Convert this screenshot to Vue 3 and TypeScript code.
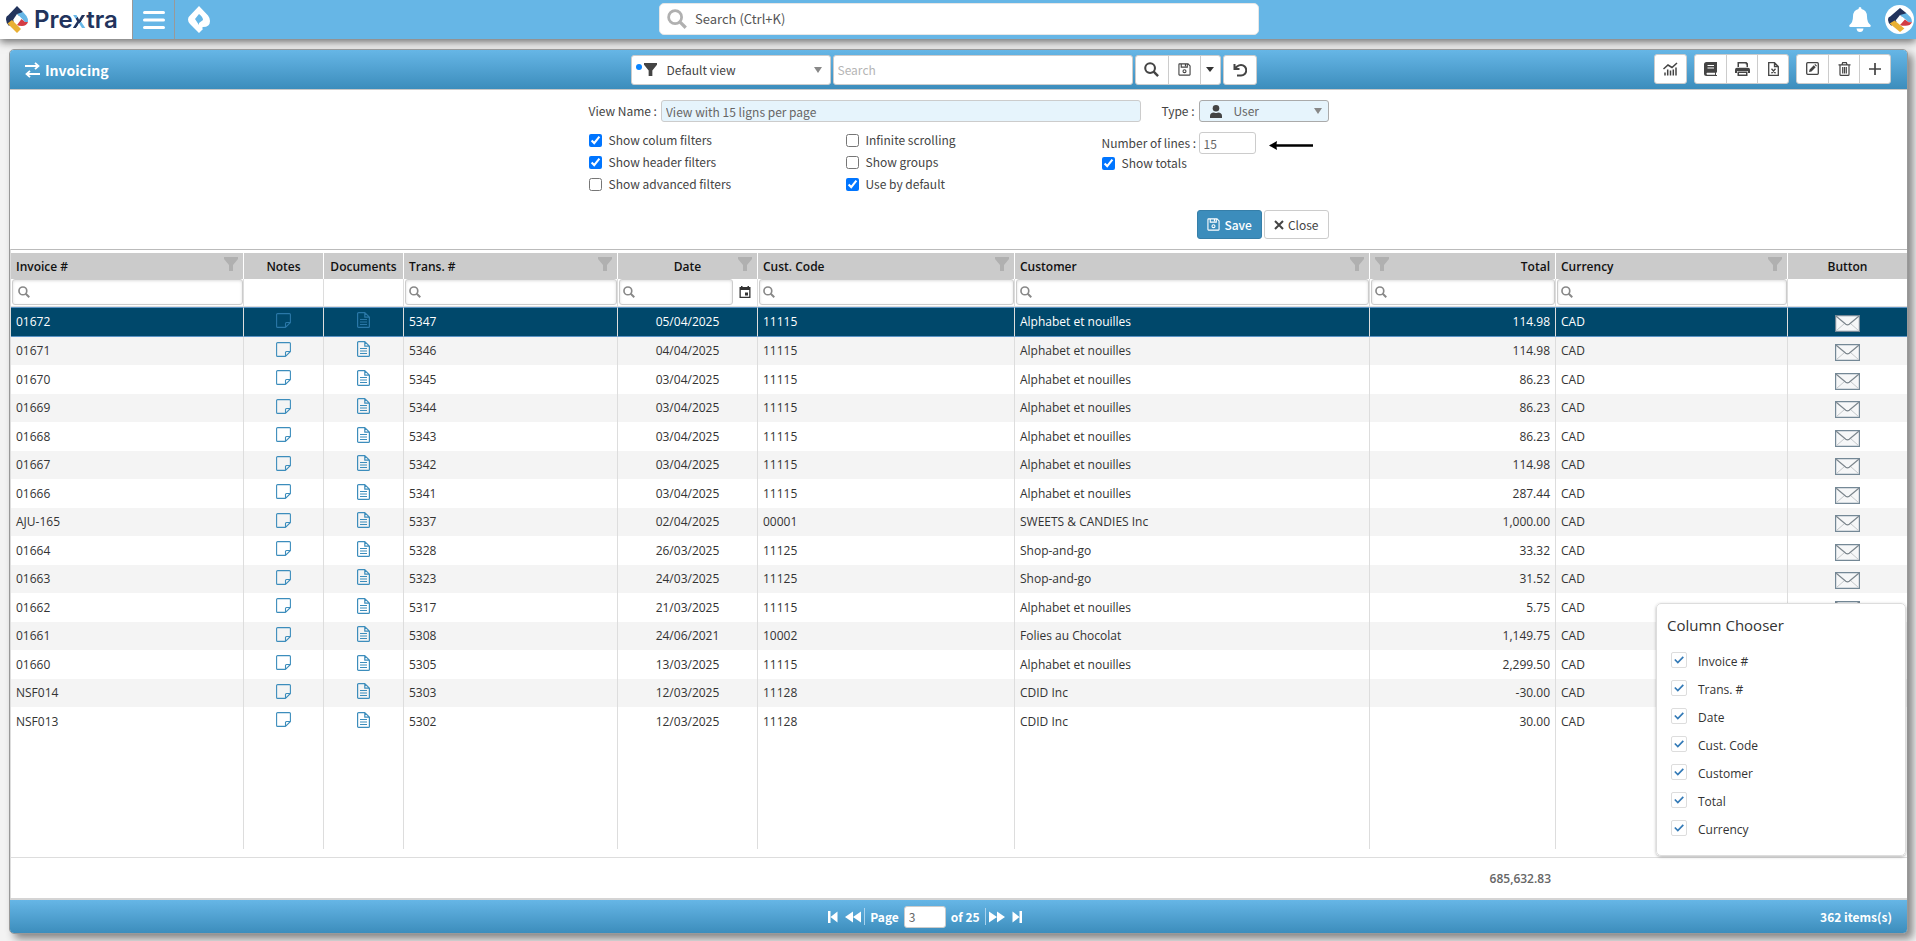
<script setup lang="ts">
import { ref } from 'vue'

interface Invoice {
  id: string
  trans: string
  date: string
  code: string
  customer: string
  total: string
}

interface Column {
  key: string
  label: string
  align: 'left' | 'center' | 'right'
  filter: boolean
}

const columns: Column[] = [
  { key: 'invoice', label: 'Invoice #', align: 'left', filter: true },
  { key: 'notes', label: 'Notes', align: 'center', filter: false },
  { key: 'documents', label: 'Documents', align: 'center', filter: false },
  { key: 'trans', label: 'Trans. #', align: 'left', filter: true },
  { key: 'date', label: 'Date', align: 'center', filter: true },
  { key: 'code', label: 'Cust. Code', align: 'left', filter: true },
  { key: 'customer', label: 'Customer', align: 'left', filter: true },
  { key: 'total', label: 'Total', align: 'right', filter: true },
  { key: 'currency', label: 'Currency', align: 'left', filter: true },
  { key: 'button', label: 'Button', align: 'center', filter: false },
]

const source: [string, string, string, string, string, string][] = [
  ['01672', '5347', '05/04/2025', '11115', 'Alphabet et nouilles', '114.98'],
  ['01671', '5346', '04/04/2025', '11115', 'Alphabet et nouilles', '114.98'],
  ['01670', '5345', '03/04/2025', '11115', 'Alphabet et nouilles', '86.23'],
  ['01669', '5344', '03/04/2025', '11115', 'Alphabet et nouilles', '86.23'],
  ['01668', '5343', '03/04/2025', '11115', 'Alphabet et nouilles', '86.23'],
  ['01667', '5342', '03/04/2025', '11115', 'Alphabet et nouilles', '114.98'],
  ['01666', '5341', '03/04/2025', '11115', 'Alphabet et nouilles', '287.44'],
  ['AJU-165', '5337', '02/04/2025', '00001', 'SWEETS & CANDIES Inc', '1,000.00'],
  ['01664', '5328', '26/03/2025', '11125', 'Shop-and-go', '33.32'],
  ['01663', '5323', '24/03/2025', '11125', 'Shop-and-go', '31.52'],
  ['01662', '5317', '21/03/2025', '11115', 'Alphabet et nouilles', '5.75'],
  ['01661', '5308', '24/06/2021', '10002', 'Folies au Chocolat', '1,149.75'],
  ['01660', '5305', '13/03/2025', '11115', 'Alphabet et nouilles', '2,299.50'],
  ['NSF014', '5303', '12/03/2025', '11128', 'CDID Inc', '-30.00'],
  ['NSF013', '5302', '12/03/2025', '11128', 'CDID Inc', '30.00'],
]

const invoices: Invoice[] = source.map(([id, trans, date, code, customer, total]) => ({
  id, trans, date, code, customer, total,
}))

const selected = ref('01672')
const viewName = ref('View with 15 ligns per page')
const lines = ref('15')
const page = ref('3')

const optionColumns = ref([
  [
    { label: 'Show colum filters', on: true },
    { label: 'Show header filters', on: true },
    { label: 'Show advanced filters', on: false },
  ],
  [
    { label: 'Infinite scrolling', on: false },
    { label: 'Show groups', on: false },
    { label: 'Use by default', on: true },
  ],
])
const showTotals = ref(true)

const chooser = ref(
  ['Invoice #', 'Trans. #', 'Date', 'Cust. Code', 'Customer', 'Total', 'Currency'].map((label) => ({
    label,
    on: true,
  })),
)
</script>

<template>
  <div class="page">
    <svg class="defs" aria-hidden="true">
      <symbol id="i-funnel" viewBox="0 0 14 14"><path fill="currentColor" d="M0 0h14v2L9 8v6H5V8L0 2z" /></symbol>
      <symbol id="i-search" viewBox="0 0 16 16">
        <circle cx="6.5" cy="6.5" r="5.2" fill="none" stroke="currentColor" stroke-width="2.2" />
        <path d="M10.3 10.3 15 15" stroke="currentColor" stroke-width="2.6" />
      </symbol>
      <symbol id="i-save" viewBox="0 0 14 14">
        <path fill="none" stroke="currentColor" stroke-width="1.2" d="M1.6 1h9.2L13 3.2v9.2a.6.6 0 0 1-.6.6H1.6a.6.6 0 0 1-.6-.6V1.6A.6.6 0 0 1 1.6 1zM3.5 1v3.500h6.500V1M8 1.500v2" />
        <circle cx="7" cy="8.800" r="1.600" fill="none" stroke="currentColor" stroke-width="1.200" />
      </symbol>
      <symbol id="i-note" viewBox="0 0 15 15">
        <path fill="none" stroke="currentColor" stroke-width="1.100" stroke-linejoin="round" d="M1.600.6h11.800a1 1 0 0 1 1 1V9.500L9.500 14.400H1.600a1 1 0 0 1-1-1V1.600a1 1 0 0 1 1-1zM14.400 9.500h-3.900a1 1 0 0 0-1 1v3.900" />
      </symbol>
      <symbol id="i-doc" viewBox="0 0 13 16">
        <path fill="none" stroke="currentColor" stroke-width="1.200" stroke-linejoin="round" d="M1.600.6h6.200l4.600 4.600v9.200a1 1 0 0 1-1 1H1.600a1 1 0 0 1-1-1V1.600a1 1 0 0 1 1-1zM7.800.6v4.600h4.600M3 7.500h7M3 10h7M3 12.500h7" />
      </symbol>
      <symbol id="i-mail" viewBox="0 0 25 17">
        <path fill="#f6f7f8" stroke="#748896" stroke-width="1.200" d="M.6.6h23.800v15.800H.6z" />
        <path fill="none" stroke="#c4c8cb" d="m1.500 15.500 8-7M23.500 15.500l-8-7" />
        <path fill="none" stroke="#7c868d" stroke-width="1.200" d="m1.200 1.200 9.600 8q1.700 1.200 3.400 0l9.600-8" />
      </symbol>
      <symbol id="i-drop" viewBox="0 0 22 27">
        <path fill="#fff" fill-rule="evenodd" d="M11 0 20 9.500Q22 12 22 15q0 6-7 6l-1 1 1 1-4 4L2 18Q0 16 0 13.500T2 9.500zM11 8 7 13l4 6v-2l4-3q0-3-4-6z" />
      </symbol>
      <symbol id="i-brand" viewBox="0 0 22 27">
        <path fill="#22335c" d="M11 0 17 6 3 20Q0 17 0 13.500T2 9.500z" />
        <path fill="#66b6e6" d="m17 6 3.500 4Q22 12 22 16h-3L11 8z" />
        <path fill="#fff" d="m11 8 6 6-6 5-4-5z" />
        <path fill="#d23c44" d="M15.500 13 19 16h3q-1.500 4-6 4-3.500 0-5-1z" />
        <path fill="#e9b034" d="m6 14 9 9-4 4L1.500 17.500z" />
      </symbol>
      <symbol id="i-first" viewBox="0 0 10 12"><path fill="currentColor" d="M0 0h2.500v12H0zM9.500.5v11L2.500 6z" /></symbol>
      <symbol id="i-rewind" viewBox="0 0 16 12"><path fill="currentColor" d="M8 .5v11L0 6zM16 .5v11L8 6z" /></symbol>
    </svg>

    <header class="topbar">
      <a class="logo" href="#" aria-label="Prextra">
        <svg class="mark"><use href="#i-brand" /></svg>
        <span>Pre<span class="ex">x</span>tra</span>
      </a>
      <button class="top-btn menu" type="button" aria-label="Menu">
        <svg width="22" height="18" viewBox="0 0 22 18"><path d="M1.500 1.500h19M1.500 9h19M1.500 16.500h19" stroke="#fff" stroke-width="3" stroke-linecap="round" /></svg>
      </button>
      <button class="top-btn" type="button" aria-label="Home">
        <svg class="mark"><use href="#i-drop" /></svg>
      </button>
      <label class="global-search">
        <svg width="20" height="20"><use href="#i-search" /></svg>
        <input type="text" aria-label="Search everywhere" placeholder="Search (Ctrl+K)" />
      </label>
      <div class="top-right">
        <button class="top-icon" type="button" aria-label="Notifications">
          <svg width="22" height="25" viewBox="0 0 22 25"><path fill="#fff" d="M11 0q1.500 0 1.500 2 5.500 1.300 5.500 7.500 0 6 3.500 8.500.8 2-1 2h-19q-1.800 0-1-2Q4 15.500 4 9.500 4 3.300 9.500 2q0-2 1.500-2zM7.500 21.500h7Q14 25 11 25t-3.500-3.500z" /></svg>
        </button>
        <button class="avatar" type="button" aria-label="Account">
          <svg width="24" height="24" viewBox="0 0 22 27" preserveAspectRatio="none"><use href="#i-brand" width="22" height="27" /></svg>
        </button>
      </div>
    </header>

    <main class="panel">
      <div class="panel-head">
        <h1>
          <svg width="15" height="16" viewBox="0 0 15 16"><path fill="none" stroke="#fff" stroke-width="1.800" d="M0 4h13M10 .8 13.500 4 10 7.200M15 12H2M5 8.800 1.500 12 5 15.200" /></svg>
          Invoicing
        </h1>
        <div class="view-tools">
          <div class="view-select">
            <i class="dot"></i>
            <svg class="funnel" width="13" height="13"><use href="#i-funnel" /></svg>
            <select aria-label="View"><option>Default view</option></select>
            <i class="caret"></i>
          </div>
          <input class="grid-search" type="text" aria-label="Search invoices" placeholder="Search" />
          <div class="group">
            <button type="button" aria-label="Search"><svg width="15" height="15"><use href="#i-search" /></svg></button>
            <button type="button" aria-label="Save view"><svg width="13" height="13"><use href="#i-save" /></svg></button>
            <button class="slim" type="button" aria-label="More"><i class="caret dark"></i></button>
          </div>
          <div class="group undo">
            <button type="button" aria-label="Reset">
              <svg width="14" height="14" viewBox="0 0 14 14"><path fill="none" stroke="currentColor" stroke-width="2" d="M1.500 1v5h5M2 5.500 4 3.500Q6 2 8 2a5 5 0 0 1 0 10.500H4" /></svg>
            </button>
          </div>
        </div>
        <div class="actions">
          <div class="group">
            <button type="button" aria-label="Chart">
              <svg width="15" height="14" viewBox="0 0 15 14"><path fill="none" stroke="currentColor" stroke-width="1.500" d="M.5 7 5 3l4 2.500L14 1M2 13.500v-3M4.700 13.500v-6M7.500 13.500v-5M10.300 13.500v-6M13 13.500v-8" /></svg>
            </button>
          </div>
          <div class="group">
            <button type="button" aria-label="Journal">
              <svg width="13" height="14" viewBox="0 0 13 14"><path fill="currentColor" fill-rule="evenodd" d="M2.500 0H13v10.500h-1V13h1v1H2.500Q0 14 0 11.500v-9Q0 0 2.500 0zM3.500 3v1H10V3zM3.500 5.500v1H10v-1zM3 10.800q-1.200 1 0 2h8v-2z" /></svg>
            </button>
            <button type="button" aria-label="Print">
              <svg width="15" height="14" viewBox="0 0 15 14"><path fill="currentColor" fill-rule="evenodd" d="M2.500 0h9L13 1.500V5h-1.500V2.500h-.8V1.500H4V5H2.500zM2 5.800h11q2 0 2 2V11h-2V9H2v2H0V7.800q0-2 2-2zM2.500 9.500h10V14h-10zM4 11v1.500h7V11z" /></svg>
            </button>
            <button type="button" aria-label="Export to Excel">
              <svg width="11" height="14" viewBox="0 0 11 14"><path fill="none" stroke="currentColor" stroke-width="1.300" d="M1.500.7h5l3.800 3.800v8.800H.7V.7zM6.500.7v3.800h3.800M3.500 6.800l4 4.500M7.500 6.800l-4 4.500" /></svg>
            </button>
          </div>
          <div class="group">
            <button type="button" aria-label="Edit">
              <svg width="13" height="13" viewBox="0 0 13 13"><rect x=".7" y=".7" width="11.600" height="11.600" rx="1" fill="none" stroke="currentColor" stroke-width="1.300" /><path fill="currentColor" d="m3 10 .6-2.500L7.800 3.300 9.700 5.200 5.500 9.400zM8.400 2.800l.8-.8L11 3.800l-.8.8z" /></svg>
            </button>
            <button type="button" aria-label="Delete">
              <svg width="13" height="14" viewBox="0 0 13 14"><path fill="none" stroke="currentColor" stroke-width="1.200" d="M.5 2.800h12M4 2.500 4.700.6h3.600L9 2.500M2 3v9.400q0 1 1 1h7q1 0 1-1V3M4.700 5v6.500M6.500 5v6.500M8.300 5v6.500" /></svg>
            </button>
            <button type="button" aria-label="Add">
              <svg width="12" height="12" viewBox="0 0 12 12"><path fill="none" stroke="currentColor" stroke-width="1.700" d="M6 0v12M0 6h12" /></svg>
            </button>
          </div>
        </div>
      </div>

      <form class="view-form" @submit.prevent>
        <div class="name-row">
          <label for="view-name">View Name :</label>
          <input id="view-name" v-model="viewName" class="field blue" type="text" />
          <label class="type-label" for="view-type">Type :</label>
          <div class="type-select">
            <svg width="12" height="13" viewBox="0 0 12 13"><circle cx="6" cy="3.300" r="3.300" fill="currentColor" /><path fill="currentColor" d="M0 13v-2q0-3.500 4-3.500 2 1 4 0 4 0 4 3.500v2z" /></svg>
            <select id="view-type"><option>User</option></select>
            <i class="caret"></i>
          </div>
        </div>
        <div class="options">
          <div v-for="(list, i) in optionColumns" :key="i" class="option-list">
            <label v-for="o in list" :key="o.label"><input v-model="o.on" type="checkbox" />{{ o.label }}</label>
          </div>
          <div class="lines-list">
            <div class="lines-row">
              <label for="lines">Number of lines :</label>
              <input id="lines" v-model="lines" class="field" type="text" />
              <svg width="44" height="9" viewBox="0 0 44 9"><path d="M0 4.500 8 0 7.500 3.200H44v2.600H7.500L8 9z" /></svg>
            </div>
            <label><input v-model="showTotals" type="checkbox" />Show totals</label>
          </div>
        </div>
        <div class="form-actions">
          <button class="save" type="submit"><svg width="13" height="13"><use href="#i-save" /></svg>Save</button>
          <button class="close" type="button">
            <svg width="10" height="10" viewBox="0 0 10 10"><path d="m1 1 8 8M9 1 1 9" stroke="currentColor" stroke-width="2" /></svg>Close
          </button>
        </div>
      </form>

      <div class="grid-wrap">
        <table>
          <colgroup>
            <col v-for="c in columns" :key="c.key" :class="'c-' + c.key" />
          </colgroup>
          <thead>
            <tr class="head">
              <th v-for="c in columns" :key="c.key" :class="c.align" scope="col">
                <div class="th">
                  <span>{{ c.label }}</span>
                  <svg v-if="c.filter" width="14" height="14"><use href="#i-funnel" /></svg>
                </div>
              </th>
            </tr>
            <tr class="filters">
              <td v-for="c in columns" :key="c.key">
                <div v-if="c.filter" class="filter-cell">
                  <div class="filter-box">
                    <svg width="12" height="12"><use href="#i-search" /></svg>
                    <input type="text" :aria-label="'Filter ' + c.label" />
                  </div>
                  <button v-if="c.key === 'date'" type="button" aria-label="Pick a date">
                    <svg width="12" height="12" viewBox="0 0 12 12"><path fill="currentColor" fill-rule="evenodd" d="M2 0h1.500v1h5V0H10v1h1.500v11H.5V1H2zM1.800 4v6.700h8.400V4zM6 6.500h3v3H6z" /></svg>
                  </button>
                </div>
              </td>
            </tr>
          </thead>
          <tbody>
            <tr v-for="r in invoices" :key="r.id" class="row" :class="{ selected: r.id === selected }" @click="selected = r.id">
              <td>{{ r.id }}</td>
              <td class="center icon"><svg width="15" height="15"><use href="#i-note" /></svg></td>
              <td class="center icon"><svg width="13" height="16"><use href="#i-doc" /></svg></td>
              <td>{{ r.trans }}</td>
              <td class="center">{{ r.date }}</td>
              <td>{{ r.code }}</td>
              <td>{{ r.customer }}</td>
              <td class="right">{{ r.total }}</td>
              <td>CAD</td>
              <td class="center mail"><svg width="25" height="17"><use href="#i-mail" /></svg></td>
            </tr>
            <tr class="filler"><td v-for="c in columns" :key="c.key"></td></tr>
            <tr class="gap"><td colspan="10"></td></tr>
          </tbody>
          <tfoot>
            <tr>
              <td colspan="7"></td>
              <td class="right">685,632.83</td>
              <td colspan="2"></td>
            </tr>
          </tfoot>
        </table>

        <fieldset class="chooser">
          <legend>Column Chooser</legend>
          <label v-for="c in chooser" :key="c.label">
            <span class="box">
              <input v-model="c.on" type="checkbox" />
              <svg v-if="c.on" width="10" height="8" viewBox="0 0 10 8"><path fill="none" stroke="#337ab7" stroke-width="1.700" d="m.8 3.500 3 3L9.300.8" /></svg>
            </span>
            {{ c.label }}
          </label>
        </fieldset>
      </div>

      <footer class="pager">
        <nav aria-label="Pages">
          <button type="button" aria-label="First page"><svg width="10" height="12"><use href="#i-first" /></svg></button>
          <button type="button" aria-label="Previous page"><svg width="16" height="12"><use href="#i-rewind" /></svg></button>
          <span class="current">
            <label for="page">Page</label>
            <input id="page" v-model="page" class="field" type="text" />
            of 25
          </span>
          <button class="flip" type="button" aria-label="Next page"><svg width="16" height="12"><use href="#i-rewind" /></svg></button>
          <button class="flip" type="button" aria-label="Last page"><svg width="10" height="12"><use href="#i-first" /></svg></button>
        </nav>
        <span class="count">362 items(s)</span>
      </footer>
    </main>
  </div>
</template>

<style>
body {
  background: #f3f3f3;
}
</style>

<style scoped>
.page,
.page * {
  box-sizing: border-box;
}
.page {
  min-height: 100vh;
  display: flex;
  flex-direction: column;
  background: #f3f3f3;
  color: #444;
  font: 12px/18px "Noto Sans CJK SC", "Open Sans", sans-serif;
}
.defs {
  position: absolute;
  width: 0;
  height: 0;
}
svg {
  display: block;
  flex: none;
}
button,
input,
select {
  font: inherit;
  color: inherit;
  margin: 0;
}
button {
  border: 0;
  background: none;
  padding: 0;
  display: flex;
  align-items: center;
  justify-content: center;
  cursor: pointer;
}
select {
  appearance: none;
  border: 0;
  background: none;
  padding: 0;
  flex: 1;
  min-width: 0;
  outline: 0;
}
.mark {
  width: 22px;
  height: 27px;
}

.topbar {
  height: 39px;
  flex: none;
  display: grid;
  grid-template-columns: auto auto auto minmax(0, 1fr) auto;
  background: #66b6e6;
  box-shadow: 0 3px 8px rgba(0, 0, 0, 0.55);
}
.logo {
  width: 133px;
  background: #fff;
  border-right: 1px solid #999;
  display: flex;
  align-items: center;
  gap: 6px;
  padding-left: 6px;
  color: #22335c;
  text-decoration: none;
  font: 600 24px/36px Inter, Lato, sans-serif;
}
.ex {
  color: transparent;
  background: linear-gradient(128deg, #66b6e6 41%, #22335c 41%, #22335c 59%, #66b6e6 59%);
  background-clip: text;
}
.top-btn {
  width: 48px;
}
.menu {
  width: 42px;
  border-right: 1px solid #999;
}
.global-search {
  justify-self: center;
  width: 600px;
  margin: 3px 0 4px;
  background: #fff;
  border: 1px solid #e6e6e6;
  border-radius: 5px;
  display: flex;
  align-items: center;
  gap: 8px;
  padding: 0 7px;
  color: #b0b0b0;
}
.global-search input {
  flex: 1;
  border: 0;
  outline: 0;
  padding: 0;
  background: none;
  font-size: 13px;
}
.global-search input::placeholder {
  color: #555;
}
.top-right {
  display: flex;
  align-items: center;
  justify-content: flex-end;
  gap: 14px;
  width: 221px;
  padding-right: 2px;
}
.avatar {
  width: 29px;
  height: 29px;
  border-radius: 50%;
  background: #fff;
}

.panel {
  flex: 1;
  margin: 10px 8px 7px 9px;
  display: flex;
  flex-direction: column;
  border: 1px solid #999;
  border-radius: 5px;
  background: #fff;
  box-shadow: 5px 5px 8px rgba(0, 0, 0, 0.45);
}
.panel-head {
  display: flex;
  align-items: center;
  height: 40px;
  flex: none;
  padding: 0 16px 0 15px;
  border-bottom: 1px solid #c8c8c8;
  border-radius: 4px 4px 0 0;
  background: linear-gradient(#66b6e6, #3c8dbc);
}
h1 {
  flex: 1 1 0;
  display: flex;
  align-items: center;
  gap: 5px;
  margin: 0;
  color: #fff;
  font-size: 14px;
  line-height: 20px;
  font-weight: 700;
}
.view-tools {
  display: flex;
  gap: 2px;
  height: 30px;
  margin-right: 29px;
}
.view-select {
  width: 200px;
  display: flex;
  align-items: center;
  background: #fff;
  border: 1px solid #ccc;
  border-radius: 3px;
  padding: 0 8px 0 4px;
}
.dot {
  width: 6px;
  height: 6px;
  border-radius: 50%;
  background: #0a84ff;
  margin: 0 2px 6px 0;
}
.funnel {
  margin-right: 10px;
}
.caret {
  width: 0;
  height: 0;
  border: 4px solid transparent;
  border-top: 6px solid #888;
  border-bottom: 0;
}
.caret.dark {
  border-top: 5px solid #333;
}
.grid-search {
  width: 300px;
  border: 1px solid #ccc;
  border-radius: 3px;
  padding: 0 4px;
  outline: 0;
  background: #fff;
}
.grid-search::placeholder {
  color: #b5b5b5;
}
.group {
  display: flex;
  height: 30px;
  background: #fff;
  border: 1px solid #ccc;
  border-radius: 3px;
}
.group button {
  width: 32px;
}
.group button + button {
  border-left: 1px solid #ccc;
}
.group .slim {
  width: 20px;
}
.actions {
  flex: 1 1 0;
  display: flex;
  justify-content: flex-end;
  gap: 7px;
  padding-bottom: 2px;
}
.actions .group button {
  width: 31px;
}

.view-form {
  width: 740px;
  height: 159px;
  margin: 0 auto;
  padding-top: 10px;
}
.name-row {
  display: flex;
  align-items: center;
}
.field,
.type-select {
  height: 22px;
  border: 1px solid #ccc;
  border-radius: 3px;
  background: #fff;
  color: #666;
  padding: 0 4px;
  outline: 0;
}
.blue {
  flex: 1;
  min-width: 0;
  margin-left: 4px;
  background: #e6f4fc;
}
.type-label {
  margin: 0 4px 0 20px;
}
.type-select {
  width: 130px;
  display: flex;
  align-items: center;
  gap: 12px;
  padding: 0 6px 0 10px;
  border-color: #aaa;
  background: #e6f4fc;
  color: #444;
}
.type-select select {
  color: #666;
}
.options {
  display: grid;
  grid-template-columns: 257px 256px 1fr;
  padding-top: 7px;
}
.options label {
  display: flex;
  align-items: center;
  white-space: nowrap;
}
.option-list label {
  height: 22px;
}
.options input[type='checkbox'] {
  width: 13px;
  height: 13px;
  margin-right: 7px;
}
.lines-row {
  display: flex;
  align-items: center;
  margin-top: 3px;
}
.lines-row .field {
  width: 57px;
  margin: 0 13px 0 auto;
}
.lines-row svg {
  margin-right: 16px;
  margin-top: 4px;
}
.form-actions {
  display: flex;
  justify-content: flex-end;
  gap: 2px;
  padding-top: 15px;
}
.form-actions button {
  height: 29px;
  gap: 4px;
  border-radius: 3px;
  padding: 0 9px;
  border: 1px solid #ccc;
  color: #444;
  background: #fff;
}
.form-actions .save {
  background: #3c8dbc;
  border-color: #367fa9;
  color: #fff;
  font-weight: 500;
}

.grid-wrap {
  flex: 1;
  position: relative;
  display: grid;
  border-top: 1px solid #bbb;
  border-left: 1px solid #ddd;
  padding-top: 3px;
  color: #333;
  font: 12px/16px "Open Sans", "Noto Sans", sans-serif;
}
table {
  width: 100%;
  height: 100%;
  table-layout: fixed;
  border-collapse: separate;
  border-spacing: 0;
}
.c-invoice { width: 233px; }
.c-notes,
.c-documents { width: 80px; }
.c-trans { width: 214px; }
.c-date { width: 140px; }
.c-code { width: 257px; }
.c-total { width: 186px; }
.c-currency { width: 232px; }
.c-button { width: 119px; }
th,
td {
  padding: 0 5px;
  text-align: left;
  border-right: 1px solid #ddd;
  white-space: nowrap;
}
th:last-child,
td:last-child {
  border-right: 0;
}
th.center,
td.center {
  text-align: center;
}
th.right,
td.right {
  text-align: right;
}
th {
  height: 26px;
  background: #cbcbcb;
  border-color: #fff;
  color: #111;
  font-weight: 600;
}
.th {
  display: flex;
  align-items: flex-start;
}
.th span {
  flex: 1;
  padding-top: 2px;
}
.th svg {
  color: #b0b0b0;
}
.right .th {
  flex-direction: row-reverse;
}
.center .th svg {
  margin-left: -14px;
}
.filters td {
  height: 28px;
  padding: 0 0 1px 1px;
  border-bottom: 1px solid #ddd;
}
.filter-cell {
  display: flex;
  height: 26px;
}
.filter-cell button {
  width: 24px;
}
.filter-box {
  flex: 1;
  min-width: 0;
  display: flex;
  align-items: center;
  gap: 6px;
  border: 1px solid #ccc;
  border-radius: 3px;
  box-shadow: inset 0 1px 3px #ddd;
  padding: 0 3px;
  color: #888;
}
td:first-child .filter-box {
  padding: 0 5px;
}
.filter-box input {
  flex: 1;
  min-width: 0;
  border: 0;
  outline: 0;
  padding: 0;
  background: none;
}
.row td {
  height: 28px;
}
.row:nth-child(odd) td {
  height: 29px;
}
.row:nth-child(even) {
  background: #f4f4f4;
}
.row.selected {
  background: #00486b;
  color: #fff;
}
.row.selected td {
  height: 30px;
  border-top: 1px solid #5b93c4;
  border-bottom: 1px solid #5b93c4;
}
.icon,
.mail {
  line-height: 0;
}
.icon svg,
.mail svg {
  margin: 0 auto;
  color: #3c8dbc;
}
.icon svg {
  margin-bottom: 4px;
}
.selected .icon svg {
  color: #2a78a8;
}
.mail svg {
  margin-top: 3px;
}
.gap td {
  height: 8px;
}
tfoot td {
  height: 41px;
  padding-top: 2px;
  border-right: 0;
  border-top: 1px solid #ddd;
  color: #666;
  font-weight: 600;
}
.chooser {
  position: absolute;
  right: 1px;
  bottom: 42px;
  width: 250px;
  margin: 0;
  padding: 12px 10px 11px;
  border: 1px solid #ddd;
  border-radius: 5px;
  background: #fff;
  box-shadow: 0 1px 3px rgba(0, 0, 0, 0.3);
  display: flex;
  flex-direction: column;
}
.chooser legend {
  float: left;
  padding: 0;
  margin-bottom: 14px;
  font-size: 15px;
  line-height: 18px;
}
.chooser label {
  display: flex;
  align-items: center;
  gap: 11px;
  height: 28px;
  padding-left: 4px;
}
.box {
  display: grid;
  place-items: center;
  margin-bottom: 4px;
}
.box > * {
  grid-area: 1 / 1;
}
.box input {
  appearance: none;
  width: 16px;
  height: 16px;
  border: 1px solid #ddd;
  border-radius: 2px;
}
.box svg {
  pointer-events: none;
}

.pager {
  height: 35px;
  flex: none;
  display: grid;
  grid-template-columns: 1fr auto 1fr;
  align-items: center;
  border-top: 2px solid #d4d4d4;
  border-radius: 0 0 4px 4px;
  background: linear-gradient(#66b6e6, #3c8dbc);
  color: #fff;
  font-weight: 700;
  padding: 0 15px;
}
.pager nav {
  grid-column: 2;
  display: flex;
  align-items: center;
  gap: 7px;
  margin-right: 67px;
}
.current {
  display: flex;
  align-items: center;
  gap: 5px;
  padding: 0 5px;
  margin: 0 -4px;
  border: 1px solid #a9d3ee;
  border-width: 0 1px;
  height: 17px;
}
.pager .field {
  width: 42px;
  font-weight: 400;
}
.flip svg {
  transform: rotate(180deg);
}
.count {
  justify-self: end;
}
</style>
